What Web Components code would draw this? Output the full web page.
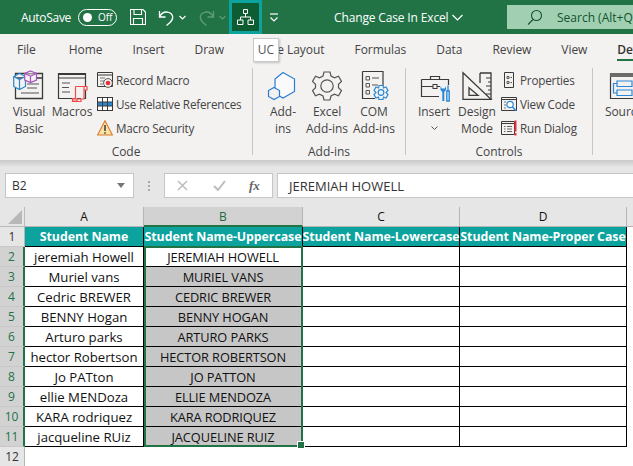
<!DOCTYPE html>
<html><head><meta charset="utf-8">
<style>
html,body{margin:0;padding:0;height:466px;overflow:hidden;background:#fff;font-family:"Open Sans","Noto Sans",sans-serif;font-size:12px;color:#444}
#app{position:relative;width:633px;height:466px;overflow:hidden}
</style></head><body>
<div id="app">
<xl-titlebar></xl-titlebar>
<xl-tabs></xl-tabs>
<xl-ribbon>
  <xl-group label="Code" style="--gw:253px;--pl:6px">
    <xl-big w="46" a="Visual" b="Basic">
      <svg viewBox="0 0 32 32" width="32" height="32" fill="none" stroke-width="1"><path d="M2.5 3.5H29.5V28.5H2.5Z M2.5 8H29.5" stroke="#3b3a39" stroke-width="1.3"/><path d="M14 14H26M14 18H24M8 23H26" stroke="#555"/><path d="M6.5 3.5L12.5 6.5V16.5L6.5 19.5L.7 16.5V6.5ZM.7 6.5L6.5 9.5L12.5 6.5M6.5 9.5V19.5" fill="#f3f2f1" stroke="#2b88c8" stroke-width="1.2"/><path d="M17.5 1L23.5 3.5V10L17.5 12.5L11.7 10V3.5ZM11.7 3.5L17.5 6.2L23.5 3.5M17.5 6.2V12.5" fill="#f3f2f1" stroke="#a94fc0" stroke-width="1.2"/></svg>
    </xl-big>
    <xl-big w="40" a="Macros">
      <svg viewBox="0 0 32 32" width="32" height="32" fill="none"><path d="M2.5 3.5H29.5V28.5H2.5Z M2.5 8H29.5 M2.5 4.5H29.5" stroke="#3b3a39" stroke-width="1.2"/><path d="M6 13H14M6 17.5H13M6 22H14" stroke="#555"/><path d="M19.5 16.5H31V20H28V29H16.5V31H21V29M19.5 16.5V28.5H16.5V31.5H25V28.5M28 16.5V20" fill="#f3f2f1" stroke="#f04a4a" stroke-width="1.2"/></svg>
    </xl-big>
    <xl-smalls style="margin-left:5px">
      <xl-small t="Record Macro"><svg viewBox="0 0 16 16" width="16" height="16" fill="none"><path d="M.5.5H15.5V14.5H.5Z" stroke="#3b3a39"/><path d="M.5 3H15.5" stroke="#3b3a39"/><path d="M3 6H8M3 9H7M3 12H6" stroke="#777"/><circle cx="11" cy="11" r="4.4" fill="#f3f2f1" stroke="#555"/><circle cx="11" cy="11" r="2.3" fill="#e8303a"/></svg></xl-small>
      <xl-small t="Use Relative References"><svg viewBox="0 0 16 16" width="16" height="16" fill="none"><rect x=".5" y="1.5" width="15" height="13" fill="#fff" stroke="#3b3a39"/><rect x="1" y="6" width="14" height="4" fill="#2b88d8"/><path d="M5.5 1.5V14.5M10.5 1.5V14.5M.5 6H15.5M.5 10H15.5" stroke="#3b3a39"/></svg></xl-small>
      <xl-small t="Macro Security"><svg viewBox="0 0 16 16" width="16" height="16" fill="none"><path d="M8 .8L15.4 15H.6Z" fill="#fbe3a4" stroke="#d9792b" stroke-width="1.1"/><path d="M8 5V11M8 12.2V13.8" stroke="#3b3a39" stroke-width="1.5"/></svg></xl-small>
    </xl-smalls>
  </xl-group>
  <xl-group label="Add-ins" style="--gw:153px;--pl:11px">
    <xl-big w="38" a="Add-" b="ins">
      <svg viewBox="0 0 32 32" width="32" height="32" fill="none"><path d="M16 2.5L27.5 9V21.5L16 28L8 23.5V9Z" fill="#fafafa" stroke="#2b7cd3" stroke-width="1.2"/><path d="M7 17.5L12.5 20.5V26.5L7 29.5L1.5 26.5V20.5Z" fill="#f3f2f1" stroke="#2b7cd3" stroke-width="1.2"/></svg>
    </xl-big>
    <xl-big w="50" a="Excel" b="Add-ins">
      <svg viewBox="0 0 32 32" width="32" height="32" fill="none" stroke="#555" stroke-width="1.2"><path d="M13 2.5H19L20 6.5L23.5 8.3L27.5 6.8L30.5 12L27.5 14.8V18.2L30.5 21L27.5 26.2L23.5 24.7L20 26.5L19 30.5H13L12 26.5L8.5 24.7L4.5 26.2L1.5 21L4.5 18.2V14.8L1.5 12L4.5 6.8L8.5 8.3L12 6.5Z" transform="translate(0 -.5)"/><circle cx="16" cy="16" r="6.2"/></svg>
    </xl-big>
    <xl-big w="44" a="COM" b="Add-ins">
      <svg viewBox="0 0 32 32" width="32" height="32" fill="none"><path d="M4.500 1.500H25V16M17 28.500H4.500V1.500" stroke="#3b3a39" stroke-width="1.2"/><path d="M8 6.500H11.500V10H8ZM8 13.500H11.500V17H8ZM8 20.500H11.500V24H8Z" stroke="#555"/><path d="M14 8H21M14 15H20" stroke="#555"/><path d="M21 15.500H25L25.500 18L28 17L30 20.500L28 22.500L30 24.500L28 28L25.500 27L25 29.500H21L20.500 27L18 28L16 24.500L18 22.500L16 20.500L18 17L20.500 18Z" fill="#f3f2f1" stroke="#2b88d8" stroke-width="1.2"/><circle cx="23" cy="22.500" r="2.800" stroke="#2b88d8" stroke-width="1.200"/></svg>
    </xl-big>
  </xl-group>
  <xl-group label="Controls" style="--gw:187px;--pl:8px">
    <xl-big w="40" a="Insert" chev>
      <svg viewBox="0 0 32 32" width="32" height="32" fill="none"><path d="M3.500 9.500H30.500V15M21 26.500H3.500V9.500M3.500 16.500H15M19 16.500H22M12.500 9.500V6.500H21.500V9.500" stroke="#3b3a39" stroke-width="1.200"/><rect x="15" y="14.500" width="4" height="4" stroke="#3b3a39"/><path d="M22.500 16V20L24.300 22V31H26.300V22L28 20V16L26.800 18.500H23.800Z" fill="#2b88d8"/><path d="M30 15.500V21M28.800 21H31.200V31H28.800Z" stroke="#2b88d8" stroke-width="1.400"/></svg>
    </xl-big>
    <xl-big w="46" a="Design" b="Mode">
      <svg viewBox="0 0 32 32" width="32" height="32" fill="none" stroke="#3b3a39" stroke-width="1.300"><path d="M2 2.700L30 29.300H2ZM8 17.700L17 25.300H8Z"/><path d="M19 3H30V29.300M19 3V13"/><path d="M25 8H30M27 12H30M25 16H30M27 20H30M25 24H30" stroke-width="1"/></svg>
    </xl-big>
    <xl-smalls style="margin-left:1px">
      <xl-small t="Properties"><svg viewBox="0 0 16 16" width="16" height="16" fill="none"><path d="M3.500.5H12.500V15.500H3.500Z" stroke="#3b3a39"/><path d="M6 4.500H8V6.500H6ZM6 9.500H8V11.500H6Z M9.500 5.500H11M9.500 10.500H11" stroke="#555"/></svg></xl-small>
      <xl-small t="View Code"><svg viewBox="0 0 16 16" width="16" height="16" fill="none"><path d="M.5 1.500H15.500V14.500H.5Z" stroke="#3b3a39"/><path d="M.5 3.500H15.500" stroke="#3b3a39"/><circle cx="9" cy="8.500" r="3.200" fill="#fff" stroke="#2b88d8" stroke-width="1.200"/><path d="M11.500 11L15 14.800" stroke="#2b88d8" stroke-width="1.500"/><path d="M3 6H5M3 9H5M3 12H5" stroke="#777"/></svg></xl-small>
      <xl-small t="Run Dialog"><svg viewBox="0 0 16 16" width="16" height="16" fill="none"><path d="M.5 1.500H13.500V14.500H.5ZM.5 3.500H13.500" stroke="#3b3a39"/><path d="M3 6.500H4.500M6 6.500H11M3 9H4.500M6 9H11M3 11.500H4.500M6 11.500H11" stroke="#666"/><path d="M14.500 .5V11.500M14.500 13V15.500" stroke="#e8303a" stroke-width="2"/></svg></xl-small>
    </xl-smalls>
  </xl-group>
  <xl-group label="" style="--gw:40px;--pl:11px">
    <xl-big w="40" a="Source">
      <svg viewBox="0 0 32 32" width="32" height="32" fill="none"><path d="M2.500 3.500H32V28.500H2.500Z" stroke="#3b3a39" stroke-width="1.200"/><rect x="2" y="3" width="30" height="4" fill="#6a6a6a"/><path d="M9 11H24V16.500H9ZM9 20H24V25.500H9ZM9 13.500H5.500V23H9" stroke="#2b88d8" stroke-width="1.200"/></svg>
    </xl-big>
  </xl-group>
</xl-ribbon>
<xl-formula></xl-formula>
<xl-sheet></xl-sheet>
<xl-tip>UC</xl-tip>
</div>
<script>
const def=(n,html,ext={})=>customElements.define(n,class extends HTMLElement{
  constructor(){super();this.attachShadow({mode:'open'}).innerHTML=typeof html==='function'?html(this):html;}
});
const FONT='"Open Sans","Noto Sans",sans-serif';
def('xl-titlebar',`<style>
:host{display:flex;align-items:center;height:34px;background:#217346;color:#fff;font:12px ${FONT};position:relative;overflow:hidden}
svg{display:block;flex:none}
.as{margin-left:21px;letter-spacing:-.3px}
.tg{margin-left:7px;width:37px;height:15px;border:1px solid #fff;border-radius:9px;display:flex;align-items:center;font-size:10px;flex:none;box-sizing:content-box}
.tg i{width:9px;height:9px;border-radius:50%;background:#fff;margin-left:4px;margin-right:6px}
.act{margin-left:3px;width:27px;height:28px;border:3px solid #0ca29d;background:#0e5c32;display:flex;align-items:center;justify-content:center;flex:none;align-self:flex-start}
.title{letter-spacing:-.15px;white-space:nowrap;display:flex;align-items:center;gap:4px}
.search{margin-left:auto;width:126px;height:24px;background:#a0cfb1;color:#14532d;display:flex;align-items:center;white-space:nowrap;overflow:hidden;flex:none}
</style>
<span class="as">AutoSave</span>
<span class="tg"><i></i>Off</span>
<svg style="margin-left:13px" width="16" height="16" viewBox="0 0 16 16" fill="none" stroke="#fff" stroke-width="1.100"><path d="M.5.500H13L15.500 3V15.500H.5ZM4 .5V5.500H11.500V.5M3.500 15.500V9.500H12.500V15.500"/></svg>
<svg style="margin-left:12px" width="17" height="17" viewBox="0 0 17 17" fill="none" stroke="#fff" stroke-width="1.300"><path d="M1.500 2V8H7.500M1.500 8C4 3 8 2.500 11 3.500C15.500 5 16 10 12 13.500L8.500 16.500"/></svg>
<svg style="margin-left:4px" width="7" height="5" viewBox="0 0 7 5" fill="none" stroke="#fff" stroke-width="1.100"><path d="M.5 1L3.500 4L6.500 1"/></svg>
<svg style="margin-left:12px" width="17" height="17" viewBox="0 0 17 17" fill="none" stroke="#5f9c79" stroke-width="1.300"><path d="M15.500 2V8H9.500M15.500 8C13 3 9 2.500 6 3.500C1.500 5 1 10 5 13.500L8.500 16.500"/></svg>
<svg style="margin-left:4px" width="7" height="5" viewBox="0 0 7 5" fill="none" stroke="#5f9c79" stroke-width="1.100"><path d="M.5 1L3.500 4L6.500 1"/></svg>
<span class="act"><svg width="17" height="16" viewBox="0 0 17 16" fill="none" stroke="#fff"><path d="M6.500 .5H10.500V4.500H6.500ZM.5 11H6V15.500H.5ZM11 11H16.500V15.500H11ZM8.500 4.500V8M3.500 11V8H13.500V11"/></svg></span>
<svg style="margin-left:7px" width="10" height="9" viewBox="0 0 10 9" fill="none" stroke="#fff"><path d="M1 1H9" stroke-width="1.200"/><path d="M1.500 4.500L5 8L8.500 4.500" stroke-width="1.200"/></svg>
<span class="title" style="margin-left:55px">Change Case In Excel <svg width="11" height="7" viewBox="0 0 11 7" fill="none" stroke="#fff" stroke-width="1.200"><path d="M.5 1L5.500 6L10.500 1"/></svg></span>
<span class="search"><svg style="margin:0 14px 0 20px" width="16" height="16" viewBox="0 0 16 16" fill="none" stroke="#14532d" stroke-width="1.100"><circle cx="9.500" cy="6.500" r="5"/><path d="M6 10.500L1 15.500"/></svg>Search (Alt+Q)</span>
`);
def('xl-tabs',`<style>
:host{display:flex;gap:30px;height:28px;background:#f3f2f1;padding-left:17px;font:12px ${FONT};color:#444;white-space:nowrap;overflow:hidden;box-sizing:border-box}
span{line-height:31px;height:28px;position:relative;flex:none;letter-spacing:-.05px}
.on{font-weight:600;color:#333}
.on::after{content:"";position:absolute;left:0;right:0;bottom:1px;height:2.500px;background:#217346}
</style><span style="margin-right:3px">File</span><span>Home</span><span>Insert</span><span style="margin-right:3px">Draw</span><span>Page Layout</span><span>Formulas</span><span>Data</span><span>Review</span><span>View</span><span class="on">Developer</span>`);
def('xl-ribbon',`<style>
:host{display:flex;align-items:stretch;height:98px;box-sizing:border-box;background:#f3f2f1;padding:6px 0 5px;overflow:hidden}
</style><slot></slot>`);
def('xl-group',h=>`<style>
:host{display:flex;flex-direction:column;flex:none;box-sizing:border-box;width:var(--gw);border-right:1px solid #c8c6c4;padding-left:var(--pl)}
:host(:last-child){border-right:0}
.c{display:flex;flex:1;min-height:0}
.l{text-align:center;font:12px/16px ${FONT};color:#444;margin:0 0 -5px calc(0px - var(--pl));height:16px;white-space:nowrap;letter-spacing:-.05px}
</style><div class="c"><slot></slot></div><div class="l">${h.getAttribute('label')||''}</div>`);
def('xl-big',h=>`<style>
:host{display:flex;flex-direction:column;align-items:center;flex:none;width:${h.getAttribute('w')}px;font:12px/17px ${FONT};color:#444;padding-top:2px;white-space:nowrap;letter-spacing:-.05px}
.s{height:32px;margin-bottom:1px}
.l{text-align:center}
svg{display:block}
</style><div class="s"><slot></slot></div><div class="l">${h.getAttribute('a')}</div>${h.getAttribute('b')?`<div class="l">${h.getAttribute('b')}</div>`:''}${h.hasAttribute('chev')?`<svg width="7" height="5" viewBox="0 0 7 5" fill="none" stroke="#555" style="margin-top:6px"><path d="M.5 .5L3.500 3.500L6.500 .5"/></svg>`:''}`);
def('xl-smalls',`<style>:host{display:flex;flex-direction:column;flex:none}</style><slot></slot>`);
def('xl-small',h=>`<style>
:host{display:flex;align-items:center;height:24px;gap:3px;font:11.700px ${FONT};color:#444;white-space:nowrap;letter-spacing:-.2px}
::slotted(svg){display:block;flex:none}
</style><slot></slot><span>${h.getAttribute('t')}</span>`);
def('xl-formula',`<style>
:host{display:flex;align-items:center;height:47px;padding-top:4px;box-sizing:border-box;background:#e6e6e6;background-image:linear-gradient(#c9c9c9,#e6e6e6 7px);font:12px ${FONT};color:#333}
div{box-sizing:border-box;height:25px;background:#fff;border:1px solid #c6c6c6;display:flex;align-items:center;flex:none}
.n{margin-left:5px;width:129px;padding-left:6px;justify-content:space-between;padding-right:8px}
.n i{border:4px solid transparent;border-top:5px solid #777;border-bottom:0}
.d{margin:0 14px;width:2px;height:10px;background:repeating-linear-gradient(#aaa 0 2px,transparent 2px 4px);border:0}
.f{width:109px;padding-left:12px;color:#777}
.fx{font:italic bold 13px "Liberation Serif",serif;color:#666;margin-left:23px}
.ck{margin-left:25px}
.v{margin-left:4px;flex:1;padding-left:11px;border-right:0;font-size:13px}
</style>
<div class="n"><span>B2</span><i></i></div><div class="d"></div>
<div class="f"><svg width="11" height="11" viewBox="0 0 11 11" fill="none" stroke="#bdbdbd" stroke-width="1.500"><path d="M1 1L10 10M10 1L1 10"/></svg><svg class="ck" width="13" height="11" viewBox="0 0 13 11" fill="none" stroke="#bdbdbd" stroke-width="2"><path d="M1 6L5 10L12 1"/></svg><span class="fx">fx</span></div>
<div class="v">JEREMIAH HOWELL</div>`);
const NAMES=[["jeremiah Howell","JEREMIAH HOWELL"],["Muriel vans","MURIEL VANS"],["Cedric BREWER","CEDRIC BREWER"],["BENNY Hogan","BENNY HOGAN"],["Arturo parks","ARTURO PARKS"],["hector Robertson","HECTOR ROBERTSON"],["Jo PATton","JO PATTON"],["ellie MENDoza","ELLIE MENDOZA"],["KARA rodriquez","KARA RODRIQUEZ"],["jacqueline RUiz","JACQUELINE RUIZ"]];
def('xl-sheet',()=>{
  let g='<i class="corner"><b></b></i>';
  ['A','B','C','D'].forEach(c=>g+=`<i class="ch${c==='B'?' sel':''}${c==='D'?' d':''}">${c}</i>`);g+='<i class="ch e"></i>';
  g+='<i class="rh">1</i>';
  ['Student Name','Student Name-Uppercase','Student Name-Lowercase','Student Name-Proper Case'].forEach(t=>g+=`<span class="h">${t}</span>`);g+='<span class="b"></span>';
  NAMES.forEach((n,i)=>{g+=`<i class="rh sel">${i+2}</i><span class="c">${n[0]}</span><span class="c u${i?' g':''}">${n[1]}</span><span class="c"></span><span class="c"></span><span class="b"></span>`;});
  g+='<i class="rh">12</i><span class="b"></span><span class="b"></span><span class="b"></span><span class="b"></span><span class="b"></span>';
  return `<style>
:host{display:block;position:relative;height:259px;overflow:hidden;background:#fff;font:13.200px ${FONT};color:#111}
.g0{display:grid;grid-template-columns:25px 119px 159px 157px 167px 6px;grid-auto-rows:20px}
.g0>*{box-sizing:border-box;font-style:normal;display:flex;align-items:center;justify-content:center;white-space:nowrap;min-width:0}
.corner{background:#e6e6e6;border-right:1px solid #bbb;border-bottom:1px solid #bbb;position:relative}
.corner b{position:absolute;right:2px;bottom:2px;border-style:solid;border-width:0 0 14px 14px;border-color:transparent transparent #b8b8b8 transparent}
.ch{background:#e6e6e6;border-right:1px solid #b5b5b5;border-bottom:1px solid #b5b5b5;font-size:12px}
.ch.sel{background:#d2d2d2;color:#1c6b3f;border-bottom:2px solid #217346}
.ch.e{border-right:0}
.rh{background:#e6e6e6;border-right:1px solid #b5b5b5;border-bottom:1px solid #c8c8c8;font-size:12px;color:#333}
.rh.sel{background:#d2d2d2;color:#217346;border-right:2px solid #217346}
.h{background:#0ca29d;color:#fff;font-weight:700;font-size:12.400px;letter-spacing:-.08px;border-bottom:1px solid #000;border-right:1px solid #000;overflow:visible}
.c{border-right:1px solid #000;border-bottom:1px solid #000;background:#fff;padding-top:1px}
.g{background:#c6c6c6}
.u{font-size:12.800px;letter-spacing:-.1px}
.sel-box{position:absolute;left:144px;top:39px;width:159px;height:201px;box-sizing:border-box;border:2px solid #217346;pointer-events:none}
.hd{position:absolute;right:-4px;bottom:-4px;width:6px;height:6px;background:#217346;border:1px solid #fff}
</style><div class="g0">${g}</div><div class="sel-box"><span class="hd"></span></div>`;
});
def('xl-tip',`<style>
:host{position:absolute;left:253px;top:38px;width:26px;height:24px;box-sizing:border-box;background:#fff;border:1px solid #c8c8c8;box-shadow:1px 1px 2px rgba(0,0,0,.2);font:12px/22px ${FONT};color:#555;text-align:center}
</style><slot></slot>`);
</script>
</body></html>
